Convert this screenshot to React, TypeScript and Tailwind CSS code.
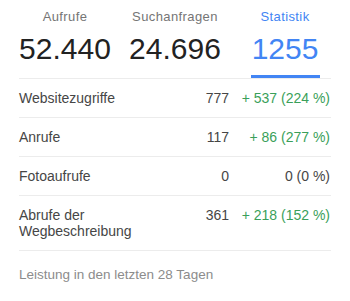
type Stat = {
  label: string;
  value: string;
  active?: boolean;
};

type Row = {
  label: string;
  value: string;
  change: string;
  up: boolean;
};

const stats: Stat[] = [
  { label: "Aufrufe", value: "52.440" },
  { label: "Suchanfragen", value: "24.696" },
  { label: "Statistik", value: "1255", active: true },
];

const rows: Row[] = [
  { label: "Websitezugriffe", value: "777", change: "+ 537 (224 %)", up: true },
  { label: "Anrufe", value: "117", change: "+ 86 (277 %)", up: true },
  { label: "Fotoaufrufe", value: "0", change: "0 (0 %)", up: false },
  { label: "Abrufe der Wegbeschreibung", value: "361", change: "+ 218 (152 %)", up: true },
];

export default function App() {
  return (
    <div className="h-[301px] w-[350px] bg-white font-['Liberation_Sans',Arial,sans-serif]">
      {/* tabs */}
      <div className="flex px-[10px] pt-2">
        {stats.map((s) => (
          <div key={s.label} className="flex w-[110px] flex-col items-center">
            <span
              className={`text-[13px] leading-[18px] tracking-[0.4px] ${
                s.active ? "text-[#4285f4]" : "text-[#757575]"
              }`}
            >
              {s.label}
            </span>
            <span
              className={`mt-[5px] text-[30px] leading-[36px] ${
                s.active ? "text-[#4285f4]" : "text-[#222222]"
              }`}
            >
              {s.value}
            </span>
            <div
              className={`mt-[8px] h-[3px] w-[69px] ${s.active ? "bg-[#4285f4]" : "bg-transparent"}`}
            />
          </div>
        ))}
      </div>
      <div className="mx-[19px] h-px bg-[#ececec]" />

      {/* rows */}
      <div className="mx-[19px]">
        {rows.map((r) => (
          <div
            key={r.label}
            className="flex items-start border-b border-[#ececec] py-[11px] text-[14px] leading-4 text-[#464646]"
          >
            <span className="w-[150px]">{r.label}</span>
            <span className="flex-1 text-right">{r.value}</span>
            <span
              className={`w-[102px] pr-px text-right ${r.up ? "text-[#3a9f5a]" : "text-[#464646]"}`}
            >
              {r.change}
            </span>
          </div>
        ))}
      </div>

      <p className="mx-[19px] mt-[14px] text-[13.5px] leading-5 text-[#8c8c8c]">
        Leistung in den letzten 28 Tagen
      </p>
    </div>
  );
}
